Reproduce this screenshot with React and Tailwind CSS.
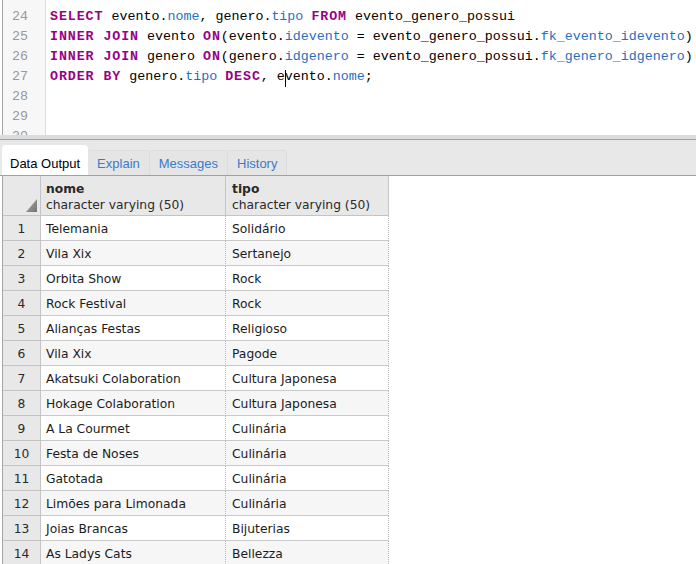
const KW = 'font-bold tracking-[0.9px] text-[#990088]'
const FD = 'text-[#1f6fc2]'

const rows = [
  ['Telemania', 'Solidário'],
  ['Vila Xix', 'Sertanejo'],
  ['Orbita Show', 'Rock'],
  ['Rock Festival', 'Rock'],
  ['Alianças Festas', 'Religioso'],
  ['Vila Xix', 'Pagode'],
  ['Akatsuki Colaboration', 'Cultura Japonesa'],
  ['Hokage Colaboration', 'Cultura Japonesa'],
  ['A La Courmet', 'Culinária'],
  ['Festa de Noses', 'Culinária'],
  ['Gatotada', 'Culinária'],
  ['Limões para Limonada', 'Culinária'],
  ['Joias Brancas', 'Bijuterias'],
  ['As Ladys Cats', 'Bellezza'],
]

function Editor() {
  return (
    <div className="ml-[2px] h-[135px] flex border-l border-[#a6a6a6] overflow-hidden font-['Liberation_Mono','Courier_New',monospace] text-[13.33px] leading-[20px]">
      {/* gutter */}
      <div className="w-[43px] shrink-0 bg-[#f7f7f7] border-r border-[#dddddd] pt-[7px] text-right pr-[17px] text-[#999999]">
        {[24, 25, 26, 27, 28, 29, 30].map((n) => (
          <div key={n} className="h-[20px]">{n}</div>
        ))}
      </div>
      {/* code */}
      <div className="pl-[4px] pt-[7px] whitespace-pre text-black">
        <div className="h-[20px]">
          <span className={KW}>SELECT</span> evento.<span className={FD}>nome</span>, genero.<span className={FD}>tipo</span> <span className={KW}>FROM</span> evento_genero_possui
        </div>
        <div className="h-[20px]">
          <span className={KW}>INNER JOIN</span> evento <span className={KW}>ON</span>(evento.<span className={FD}>idevento</span> = evento_genero_possui.<span className={FD}>fk_evento_idevento</span>)
        </div>
        <div className="h-[20px]">
          <span className={KW}>INNER JOIN</span> genero <span className={KW}>ON</span>(genero.<span className={FD}>idgenero</span> = evento_genero_possui.<span className={FD}>fk_genero_idgenero</span>)
        </div>
        <div className="h-[20px]">
          <span className={KW}>ORDER BY</span> genero.<span className={FD}>tipo</span> <span className={KW}>DESC</span>,{' '}
          <span className="relative">
            e
            <span className="absolute right-[-1px] top-[1px] w-px h-[17px] bg-black" />
          </span>
          vento.<span className={FD}>nome</span>;
        </div>
      </div>
    </div>
  )
}

function Tabs() {
  const others = ['Explain', 'Messages', 'History']
  return (
    <div className="h-[36px] bg-[#e8e8e8] border-b border-[#a0a0a0] pl-[2px] flex items-end font-['Liberation_Sans',Arial,sans-serif] text-[13px] leading-[16px]">
      <div className="h-[30px] px-[8px] pb-[3px] flex items-end bg-white rounded-t-[4px] text-black">
        Data Output
      </div>
      {others.map((t) => (
        <div
          key={t}
          className="h-[25px] px-[9px] pb-[3px] flex items-end bg-[#e5e5e5] border-t border-r border-[#dcdcdc] rounded-t-[3px] text-[#3a7bc8]"
        >
          {t}
        </div>
      ))}
    </div>
  )
}

function Grid() {
  return (
    <div className="ml-[2px] border-l border-[#a6a6a6] font-['DejaVu_Sans',Tahoma,sans-serif] text-[12.3px] leading-[16px]">
      {/* header */}
      <div className="flex h-[40px]">
        <div className="w-[38px] shrink-0 bg-[#e8e8e8] border-r border-b border-[#c4c4c4] flex items-end justify-end pr-[3px] pb-[3px]">
          <svg width="11" height="13" viewBox="0 0 11 13">
            <defs>
              <linearGradient id="tri" x1="0" y1="0" x2="1" y2="1">
                <stop offset="0" stopColor="#b0b0b0" />
                <stop offset="1" stopColor="#707070" />
              </linearGradient>
            </defs>
            <polygon points="11,0 11,13 0,13" fill="url(#tri)" />
          </svg>
        </div>
        <div className="w-[185px] shrink-0 bg-[#e8e8e8] border-r border-b border-[#c4c4c4] pl-[5px] pt-[5px] text-[#2a2a2a]">
          <div className="font-bold">nome</div>
          <div>character varying (50)</div>
        </div>
        <div className="w-[163px] shrink-0 bg-[#e8e8e8] border-r border-b border-[#c4c4c4] pl-[6px] pt-[5px] text-[#2a2a2a]">
          <div className="font-bold">tipo</div>
          <div>character varying (50)</div>
        </div>
      </div>
      {/* rows */}
      {rows.map((r, i) => (
        <div key={i} className="flex h-[25px]">
          <div className="w-[38px] shrink-0 bg-[#e8e8e8] border-r border-b border-[#c4c4c4] flex items-center justify-center pt-[2px] text-[#2a2a2a]">
            {i + 1}
          </div>
          <div
            className={`w-[185px] shrink-0 border-b border-b-[#cacaca] border-r border-r-[#b8b8b8] border-dotted flex items-center pt-[2px] pl-[5px] text-[#1c1c1c] ${i % 2 ? 'bg-[#f6f6f6]' : 'bg-white'}`}
            style={{ borderBottomStyle: 'solid' }}
          >
            {r[0]}
          </div>
          <div
            className={`w-[163px] shrink-0 border-b border-b-[#cacaca] border-r border-r-[#b8b8b8] border-dotted flex items-center pt-[2px] pl-[6px] text-[#1c1c1c] ${i % 2 ? 'bg-[#f6f6f6]' : 'bg-white'}`}
            style={{ borderBottomStyle: 'solid' }}
          >
            {r[1]}
          </div>
        </div>
      ))}
    </div>
  )
}

export default function App() {
  return (
    <div className="w-[696px] h-[564px] overflow-hidden bg-white">
      <Editor />
      <div className="h-[5px] bg-[#dcdcdc] border-b border-[#a0a0a0]" />
      <Tabs />
      <Grid />
    </div>
  )
}
